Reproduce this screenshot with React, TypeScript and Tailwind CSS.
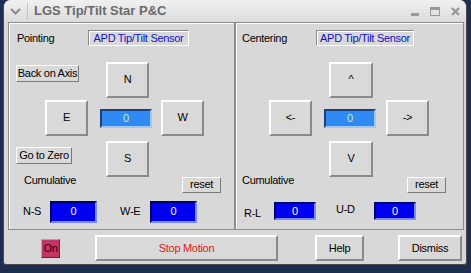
import React from "react";

const raised =
  "bg-[#d9d9d9] border-2 border-t-white border-l-white border-b-[#8a8a8a] border-r-[#8a8a8a] flex items-center justify-center";
const smallRaised =
  "bg-[#d9d9d9] border border-t-white border-l-white border-b-[#7a7a7a] border-r-[#7a7a7a] flex items-center justify-center leading-none";

const Pad = ({ label, className }: { label: string; className: string }) => (
  <div className={`${raised} w-[43px] h-[36px] ${className}`}>{label}</div>
);

const Readout = ({ className }: { className: string }) => (
  <div
    className={`w-[52px] h-[19px] bg-[#2f8bf3] border-2 border-t-[#1b3f7a] border-l-[#1b3f7a] border-b-[#9cc8ff] border-r-[#9cc8ff] flex items-center justify-center text-[#b8f0a8] ${className}`}
  >
    0
  </div>
);

const Cum = ({ className }: { className: string }) => (
  <div
    className={`bg-[#0000f0] border-2 border-t-[#00006a] border-l-[#00006a] border-b-[#7a8cff] border-r-[#7a8cff] flex items-center justify-center text-white ${className}`}
  >
    0
  </div>
);

const Sensor = ({ w }: { w: string }) => (
  <div
    className={`${w} h-[16px] border border-t-[#8a8a8a] border-l-[#8a8a8a] border-b-white border-r-white shadow-[inset_1px_1px_0_#fff] flex items-center justify-center text-[#1010c8]`}
  >
    APD Tip/Tilt Sensor
  </div>
);

export default function App() {
  return (
    <div
      className="w-[471px] h-[273px] bg-[#1f2d50] overflow-hidden text-[11px] tracking-[-0.3px] text-black"
      style={{ fontFamily: '"Liberation Sans", Arial, sans-serif' }}
    >
      <div className="ml-[3px] w-[464px] h-[265px] bg-[#d8d8d8] rounded-t-[7px] rounded-b-[3px] border border-t-0 border-[#4a4a4a] flex flex-col">
        {/* title bar */}
        <div className="h-[22px] rounded-t-[7px] bg-gradient-to-b from-[#f0f0f0] to-[#dcdcdc] flex items-center">
          <svg width="11" height="7" viewBox="0 0 11 7" className="ml-[6px] mt-[1px]">
            <path d="M1 1 L5.5 5.5 L10 1" stroke="#8c8c8c" strokeWidth="2.2" fill="none" />
          </svg>
          <div className="w-px h-[16px] bg-[#c4c4c4] ml-[6px]" />
          <span className="ml-[6px] text-[13px] font-bold text-[#6a6a6a] tracking-normal">
            LGS Tip/Tilt Star P&amp;C
          </span>
          <div className="ml-auto mr-[6px] flex items-center gap-[11px]">
            <div className="w-[8px] h-[3px] bg-[#9a9a9a] mt-[6px]" />
            <div className="w-[10px] h-[9px] border border-[#9a9a9a] border-t-[3px]" />
            <svg width="9" height="9" viewBox="0 0 9 9">
              <path d="M1 1 L8 8 M8 1 L1 8" stroke="#9a9a9a" strokeWidth="2.4" />
            </svg>
          </div>
        </div>

        {/* panels */}
        <div className="ml-[4px] w-[456px] h-[208px] flex border border-[#8c8c8c] shadow-[inset_1px_1px_0_#fff]">
          {/* Pointing */}
          <div className="w-[226px] border-r border-[#8c8c8c] flex flex-col">
            <div className="mt-[7px] flex items-center">
              <span className="ml-[8px] w-[71px]">Pointing</span>
              <Sensor w="w-[101px]" />
            </div>
            <div className="mt-[15px] flex items-start">
              <div className={`${smallRaised} ml-[7px] mt-[3px] w-[63px] h-[17px]`}>Back on Axis</div>
              <Pad label="N" className="ml-[27px] w-[42px]" />
            </div>
            <div className="mt-[2px] flex items-center">
              <Pad label="E" className="ml-[36px]" />
              <Readout className="ml-[12px] mt-[2px]" />
              <Pad label="W" className="ml-[9px]" />
            </div>
            <div className="mt-[5px] flex items-start">
              <div className={`${smallRaised} ml-[7px] mt-[6px] w-[56px] h-[17px]`}>Go to Zero</div>
              <Pad label="S" className="ml-[34px] w-[42px]" />
            </div>
            <div className="flex items-start">
              <span className="ml-[15px] -mt-[3px] leading-[13px]">Cumulative</span>
              <div className={`${smallRaised} ml-auto mr-[13px] w-[39px] h-[16px]`}>reset</div>
            </div>
            <div className="mt-[8px] flex items-center">
              <span className="ml-[14px] w-[27px]">N-S</span>
              <Cum className="w-[47px] h-[22px]" />
              <span className="ml-[23px] w-[30px]">W-E</span>
              <Cum className="w-[47px] h-[22px]" />
            </div>
          </div>

          {/* Centering */}
          <div className="flex-1 border-l border-[#8c8c8c] shadow-[inset_1px_1px_0_#fff] flex flex-col">
            <div className="mt-[7px] flex items-center">
              <span className="ml-[6px] w-[74px]">Centering</span>
              <Sensor w="w-[98px]" />
            </div>
            <div className="mt-[15px] flex">
              <Pad label="^" className="ml-[93px] w-[44px]" />
            </div>
            <div className="mt-[2px] flex items-center">
              <Pad label="<-" className="ml-[33px]" />
              <Readout className="ml-[12px] mt-[2px]" />
              <Pad label="->" className="ml-[10px]" />
            </div>
            <div className="mt-[5px] flex">
              <Pad label="V" className="ml-[93px] w-[44px]" />
            </div>
            <div className="flex items-start">
              <span className="ml-[6px] -mt-[3px] leading-[13px]">Cumulative</span>
              <div className={`${smallRaised} ml-auto mr-[17px] w-[39px] h-[16px]`}>reset</div>
            </div>
            <div className="mt-[8px] flex items-center">
              <span className="ml-[8px] w-[30px] mt-[4px]">R-L</span>
              <Cum className="w-[42px] h-[18px]" />
              <span className="ml-[20px] w-[38px] -mt-[4px]">U-D</span>
              <Cum className="w-[42px] h-[18px]" />
            </div>
          </div>
        </div>

        {/* bottom bar */}
        <div className="mt-[5px] flex items-center">
          <div className="ml-[37px] w-[19px] h-[19px] bg-[#c23463] border border-t-[#e888a8] border-l-[#e888a8] border-b-[#7a1838] border-r-[#7a1838] flex items-center justify-center text-[#2a0010]">
            On
          </div>
          <div className={`${raised} ml-[35px] w-[183px] h-[26px] text-[#e01818]`}>Stop Motion</div>
          <div className={`${raised} ml-[37px] w-[49px] h-[26px]`}>Help</div>
          <div className={`${raised} ml-[34px] w-[64px] h-[26px]`}>Dismiss</div>
        </div>
      </div>
    </div>
  );
}
